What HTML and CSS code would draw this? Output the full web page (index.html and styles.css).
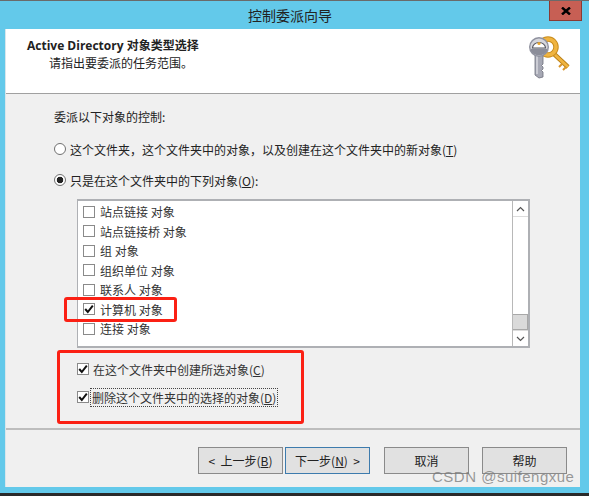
FILE: index.html
```html
<!DOCTYPE html>
<html lang="zh-CN">
<head>
<meta charset="utf-8">
<title>控制委派向导</title>
<link rel="stylesheet" href="styles.css">
</head>
<body>
<div class="window">
  <div class="titlebar">
    <span class="title">控制委派向导</span>
    <span class="close"><svg width="10" height="8" viewBox="0 0 10 8"><path d="M1 0.5 L9 7.5 M9 0.5 L1 7.5" stroke="#000" stroke-width="2.4" fill="none"/></svg></span>
  </div>
  <div class="client">
    <header class="head">
      <div class="head-text">
        <div class="head-title">Active Directory 对象类型选择</div>
        <div class="head-sub">请指出要委派的任务范围。</div>
      </div>
      <svg class="keys" width="42" height="46" viewBox="0 0 42 46">
        <path d="M24 19 L39 33" stroke="#b97f14" stroke-width="4.5" fill="none"/>
        <path d="M24 19 L39 33" stroke="#f0b440" stroke-width="2.8" fill="none"/>
        <path d="M33 30 L30 33 M37 33 L34 36" stroke="#d8952a" stroke-width="2"/>
        <circle cx="19" cy="13" r="8" fill="none" stroke="#c98d1e" stroke-width="5.5"/>
        <circle cx="19" cy="13" r="8" fill="none" stroke="#f0b440" stroke-width="3.5"/>
        <path d="M6 20 L6 41 L10 44 L14 43 L14 38 L12.5 36.5 L14 35 L14 33 L12.5 31.5 L14 30 L14 20 Z" fill="#a6a8b4" stroke="#6d6f7c" stroke-width=".8"/>
        <path d="M8 22 L8 40" stroke="#e4e5ea" stroke-width="1.2"/>
        <circle cx="10" cy="13" r="10" fill="#8f919e"/>
        <circle cx="10" cy="13" r="8.6" fill="#d5d6dc"/>
        <path d="M3.5 14 A6.5 5.5 0 0 1 16.5 14 Z" fill="#fff" stroke="#55565f" stroke-width="1.2"/>
        <path d="M2 15 H18 V17 A9 8 0 0 1 2 17 Z" fill="#8b8d99"/>
        <circle cx="10" cy="9.500" r="1.6" fill="#e9a730"/>
      </svg>
    </header>
    <main class="body">
      <p class="prompt">委派以下对象的控制:</p>
      <label class="radio-row"><span class="radio"></span><span>这个文件夹，这个文件夹中的对象，以及创建在这个文件夹中的新对象(<u>T</u>)</span></label>
      <label class="radio-row second"><span class="radio on"></span><span>只是在这个文件夹中的下列对象(<u>O</u>):</span></label>
      <div class="listbox">
        <ul class="items">
          <li class="item"><span class="check"></span>站点链接 对象</li>
          <li class="item"><span class="check"></span>站点链接桥 对象</li>
          <li class="item"><span class="check"></span>组 对象</li>
          <li class="item"><span class="check"></span>组织单位 对象</li>
          <li class="item"><span class="check"></span>联系人 对象</li>
          <li class="item"><span class="check on"><svg width="12" height="12" viewBox="0 0 12 12"><path d="M2.2 6 L4.8 9 L9.8 2.6" stroke="#111" stroke-width="2" fill="none"/></svg></span>计算机 对象</li>
          <li class="item"><span class="check"></span>连接 对象</li>
        </ul>
        <div class="scrollbar">
          <span class="arrow"><svg width="9" height="6" viewBox="0 0 9 6"><path d="M1 5 L4.5 1.5 L8 5" stroke="#555" stroke-width="1.2" fill="none"/></svg></span>
          <span class="track"></span>
          <span class="thumb"></span>
          <span class="arrow"><svg width="9" height="6" viewBox="0 0 9 6"><path d="M1 1 L4.5 4.5 L8 1" stroke="#555" stroke-width="1.2" fill="none"/></svg></span>
        </div>
      </div>
      <label class="opt first"><span class="check on"><svg width="12" height="12" viewBox="0 0 12 12"><path d="M2.2 6 L4.8 9 L9.8 2.6" stroke="#111" stroke-width="2" fill="none"/></svg></span><span class="opt-text">在这个文件夹中创建所选对象(<u>C</u>)</span></label>
      <label class="opt"><span class="check on"><svg width="12" height="12" viewBox="0 0 12 12"><path d="M2.2 6 L4.8 9 L9.8 2.6" stroke="#111" stroke-width="2" fill="none"/></svg></span><span class="opt-text focus">删除这个文件夹中的选择的对象(<u>D</u>)</span></label>
    </main>
    <footer class="foot">
      <button class="btn">&lt;&nbsp; 上一步(<u>B</u>)</button>
      <button class="btn default">下一步(<u>N</u>) &nbsp;&gt;</button>
      <button class="btn gap">取消</button>
      <button class="btn gap">帮助</button>
    </footer>
  </div>
  <div class="mark mark-a"></div>
  <div class="mark mark-b"></div>
  <div class="watermark">CSDN @suifengxue</div>
</div>
</body>
</html>
```

FILE: styles.css
```css
* { box-sizing: border-box; }
html, body { margin: 0; padding: 0; }
body {
  width: 589px;
  height: 496px;
  overflow: hidden;
  background: #2a2a2a;
  font-family: "Noto Sans CJK SC", "Liberation Sans", sans-serif;
  font-size: 12px;
  color: #222;
}
.window {
  position: relative;
  width: 589px;
  height: 493px;
  background: #63c9ea;
  border-top: 1px solid #6a6a6a;
  padding: 0 9px 6px 5px;
  display: flex;
  flex-direction: column;
}
.titlebar {
  height: 28px;
  flex: none;
  display: flex;
  align-items: center;
  justify-content: center;
  position: relative;
  padding-right: 5px;
}
.title { font-size: 14px; color: #222; line-height: 28px; }
.close {
  position: absolute;
  top: 0;
  right: -2px;
  width: 33px;
  height: 20px;
  background: #c75f54;
  border: 1px solid #8a3a33;
  border-top: 0;
  display: flex;
  align-items: center;
  justify-content: center;
}
.client {
  flex: 1;
  background: #f0f0f0;
  display: flex;
  flex-direction: column;
  border-left: 1px solid #d8e6ec;
}
.head {
  height: 65px;
  flex: none;
  background: #fff;
  border-bottom: 1px solid #a0a0a0;
  display: flex;
  justify-content: space-between;
  padding: 8px 0 0 21px;
}
.head-title { font-family: "Open Sans", "Noto Sans CJK SC", sans-serif; font-weight: 700; font-size: 12px; line-height: 17px; }
.head-sub { padding-left: 22px; line-height: 17px; }
.keys { margin: -3px 9px 0 0; }
.body {
  flex: 1;
  padding: 14px 0 0 48px;
  display: flex;
  flex-direction: column;
}
.prompt { margin: 0; line-height: 18px; }
.radio-row { display: flex; align-items: center; gap: 4px; margin-top: 14px; height: 18px; }
.radio-row.second { margin-top: 13px; }
.radio {
  width: 12px;
  height: 12px;
  flex: none;
  border: 1px solid #707070;
  border-radius: 50%;
  background: #fff;
}
.radio.on { background: radial-gradient(circle, #222 0 3px, #fff 3.6px); }
.listbox {
  margin: 10px 0 0 23px;
  width: 453px;
  height: 149px;
  background: #fff;
  border: 1px solid #aeb0b4;
  border-width: 2px 2px 2px 1px;
  display: flex;
  justify-content: space-between;
}
.items { list-style: none; margin: 0; padding: 1px 0 0 5px; }
.item { display: flex; align-items: center; gap: 5px; height: 19.5px; color: #333; }
.check {
  width: 12px;
  height: 12px;
  flex: none;
  border: 1px solid #8a8a8a;
  background: #fff;
  display: block;
}
.check svg { display: block; margin: -1px; }
.scrollbar {
  width: 16px;
  flex: none;
  border-left: 1px solid #b8b8b8;
  display: flex;
  flex-direction: column;
}
.arrow {
  height: 16px;
  flex: none;
  display: flex;
  align-items: center;
  justify-content: center;
  border-bottom: 1px solid #dcdcdc;
}
.arrow:last-child { border-top: 1px solid #dcdcdc; border-bottom: 0; }
.track { flex: 1; }
.thumb { height: 16px; flex: none; background: #dadada; border: 1px solid #a8a8a8; border-left: 0; }
.opt { display: flex; align-items: center; gap: 4px; height: 18px; margin-left: 23px; color: #333; }
.opt.first { margin-top: 12px; margin-bottom: 10px; }
.focus { outline: 1px dotted #444; margin-left: -2px; padding: 0 1px; }
.foot {
  height: 59px;
  flex: none;
  border-top: 2px solid #bdbdbd;
  display: flex;
  align-items: flex-start;
  padding: 17px 11px 0 192px;
  gap: 2px;
}
.btn {
  width: 85px;
  height: 27px;
  background: #e1e1e1;
  border: 1px solid #8a8a8a;
  font: inherit;
  color: #222;
  padding: 0;
}
.btn.default { border-color: #3d7bad; }
.btn.gap { margin-left: 12px; }
.foot .btn:last-child { margin-left: 11px; }
.mark { position: absolute; border: 3px solid #fb2014; border-radius: 3px; }
.mark-a { left: 64px; top: 296px; width: 113px; height: 25px; }
.mark-b { left: 57px; top: 349px; width: 247px; height: 74px; }
.watermark {
  position: absolute;
  left: 432px;
  top: 466px;
  font-family: "Liberation Sans", sans-serif;
  font-size: 15px;
  line-height: 20px;
  color: rgba(120,120,120,.75);
  letter-spacing: .5px;
}
```
